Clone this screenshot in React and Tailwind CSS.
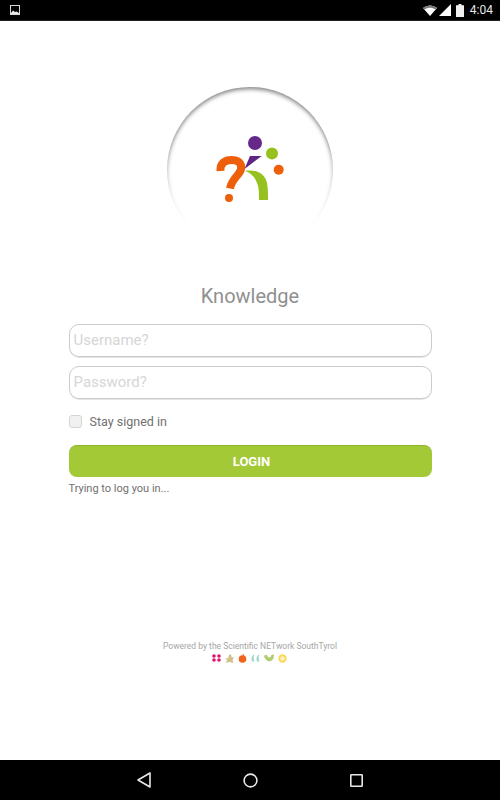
import { useState } from 'react';

function StatusBar() {
    return (
        <div className="h-[21px] bg-black flex items-center justify-between pl-[10px] pr-[7px] border-b border-[#222]">
            <svg width="10" height="10" viewBox="0 0 10 10">
                <rect x="0.5" y="0.5" width="9" height="9" fill="none" stroke="#d8d8d8" />
                <path d="M1 8 L3 5.5 L5 7 L6.5 6.5 L9 8 V9 H1 Z" fill="#e8e8e8" />
            </svg>
            <div className="flex items-center">
                <svg width="14" height="11" viewBox="0 0 14 11" className="mr-[2px]">
                    <path d="M0 3 C4 -0.5 10 -0.5 14 3 L7 11 Z" fill="#ffffff" />
                    <path d="M0 3 C4 -0.5 10 -0.5 14 3 L12.6 4.6 C9 2 5 2 1.4 4.6 Z" fill="#777777" />
                </svg>
                <svg width="12" height="12" viewBox="0 0 12 12" className="mr-[5px]">
                    <path d="M0 12 L12 0 V12 Z" fill="#ffffff" />
                </svg>
                <svg width="8" height="13" viewBox="0 0 8 13" className="mr-[6px]">
                    <path d="M2.5 0 H5.5 V1.2 H8 V13 H0 V1.2 H2.5 Z" fill="#f0f0f0" />
                </svg>
                <span className="text-[12px] text-[#e6e6e6] font-['Roboto',sans-serif] leading-none">4:04</span>
            </div>
        </div>
    );
}

function Logo() {
    return (
        <svg width="90" height="85" viewBox="0 0 90 85" className="absolute left-[38px] top-[38px]">
            <circle cx="50" cy="18" r="7" fill="#66298a" />
            <circle cx="67" cy="28.5" r="6" fill="#97c11f" />
            <circle cx="73.7" cy="44.7" r="5" fill="#ee5f0c" />
            <path d="M39.5 44 L45 31 H56.7 L39.5 44 Z" fill="#5f2585" />
            <path d="M40 46 C50 44 60 48 62 58 C63 63 63 70 63 75 H54 C54 68 54 62 52 58 C50 52 46 48 40 46 Z" fill="#97c11f" />
            <path d="M15.5 46 C15 38 20 35 26.5 35 C33 35 37 38 36 44 C35 50 27 53 25 63.5" fill="none" stroke="#ee5f0c" strokeWidth="8" />
            <circle cx="24" cy="73" r="4" fill="#ee5f0c" />
        </svg>
    );
}

function PartnerIcons() {
    return (
        <div className="flex items-center justify-center gap-[4px] mt-[1px] h-[10px]">
            <svg width="9" height="8" viewBox="0 0 9 8">
                <circle cx="2" cy="2" r="1.8" fill="#e2136e" />
                <circle cx="7" cy="2" r="1.8" fill="#e2136e" />
                <circle cx="2" cy="6" r="1.8" fill="#e2136e" />
                <circle cx="7" cy="6" r="1.8" fill="#e2136e" />
            </svg>
            <svg width="9" height="9" viewBox="0 0 9 9">
                <path d="M0 4 L3 4.5 L4 1 L6 0 L6.5 3 L9 3.5 L7.5 6 L8.5 9 L4 8 L1 9 L2 6 Z" fill="#d3c08f" />
            </svg>
            <svg width="9" height="9" viewBox="0 0 9 9">
                <circle cx="4.5" cy="5" r="3.8" fill="#f0641e" />
                <path d="M4 1 L6 0 V2 Z" fill="#f0641e" />
            </svg>
            <svg width="9" height="8" viewBox="0 0 9 8">
                <path d="M3.5 0 C1 1.5 0 4 0.5 6 L1.5 8 L3.5 7 C2.5 5 2.5 3 3.5 0 Z M8.5 0 C6 1.5 5 4 5.5 6 L6.5 8 L8.5 7 C7.5 5 7.5 3 8.5 0 Z" fill="#a8d8cf" />
            </svg>
            <svg width="10" height="8" viewBox="0 0 10 8">
                <path d="M0 2 C1 6 4 8 7 7 C9 6 10 4 10 1 C8.5 0 7 1 7 2.5 C6 4 4 4 3 1 C2 0.5 1 1 0 2 Z" fill="#b2cc72" />
            </svg>
            <svg width="9" height="9" viewBox="0 0 9 9">
                <circle cx="4.5" cy="4.5" r="3.2" fill="#fff3c0" stroke="#fbd75b" strokeWidth="2" />
            </svg>
        </div>
    );
}

function NavBar() {
    return (
        <div className="h-[40px] bg-black relative flex items-center justify-center gap-[92px] shrink-0">
            <svg width="14" height="16" viewBox="0 0 14 16">
                <path d="M13 1 V15 L1 8 Z" fill="none" stroke="#e8e8e8" strokeWidth="1.6" strokeLinejoin="round" />
            </svg>
            <svg width="15" height="15" viewBox="0 0 15 15">
                <circle cx="7.5" cy="7.5" r="6.4" fill="none" stroke="#e8e8e8" strokeWidth="1.6" />
            </svg>
            <svg width="13" height="13" viewBox="0 0 13 13">
                <rect x="0.8" y="0.8" width="11.4" height="11.4" fill="none" stroke="#e8e8e8" strokeWidth="1.6" rx="0.5" />
            </svg>
        </div>
    );
}

export default function App() {
    const [stay, setStay] = useState(false);

    return (
        <div className="w-[500px] h-[800px] flex flex-col bg-white font-['Roboto',sans-serif] overflow-hidden">
            <StatusBar />

            <div className="flex-1 flex flex-col items-center pt-[66px]">
                <div className="relative w-[166px] h-[166px] rounded-full shadow-[inset_0_2px_4px_rgba(0,0,0,0.5)]">
                    <div className="absolute left-[-2px] right-[-2px] bottom-[-2px] h-[110px] bg-gradient-to-t from-white from-25% to-transparent" />
                    <Logo />
                </div>

                <h1 className="mt-[29px] text-[20px] leading-[28px] font-normal text-[#909090]">Knowledge</h1>

                <div className="mt-[14px] w-[363px] flex flex-col">
                    <input
                        placeholder="Username?"
                        className="h-[33px] w-full rounded-[10px] border border-[#cbcbcb] px-1 pb-[2px] text-[15px] outline-none shadow-[0_1px_0_#e6e6e6] placeholder:text-[#d6d6d6]"
                    />
                    <input
                        placeholder="Password?"
                        className="mt-[9px] h-[33px] w-full rounded-[10px] border border-[#cbcbcb] px-1 pb-[2px] text-[15px] outline-none shadow-[0_1px_0_#e6e6e6] placeholder:text-[#d6d6d6]"
                    />

                    <label className="mt-[16px] h-[13px] flex items-center">
                        <input
                            type="checkbox"
                            checked={stay}
                            onChange={() => setStay(!stay)}
                            className="appearance-none w-[13px] h-[13px] rounded-[3px] border border-[#d4d4d4] bg-[#f1f1f1]"
                        />
                        <span className="ml-[8px] pt-[1px] text-[12.5px] text-[#707070]">Stay signed in</span>
                    </label>

                    <button className="mt-[17px] h-[32px] w-full rounded-[8px] bg-[#a3c936] border-t border-[#8fb22a] pl-[3px] text-white text-[13px] font-bold">
                        LOGIN
                    </button>

                    <p className="mt-[5px] text-[11px] leading-[13px] text-[#707070]">Trying to log you in...</p>
                </div>

                <div className="mt-[146px] text-center">
                    <p className="text-[8.5px] leading-[11px] text-[#a6a6a6]">Powered by the Scientific NETwork SouthTyrol</p>
                    <PartnerIcons />
                </div>
            </div>

            <NavBar />
        </div>
    );
}
